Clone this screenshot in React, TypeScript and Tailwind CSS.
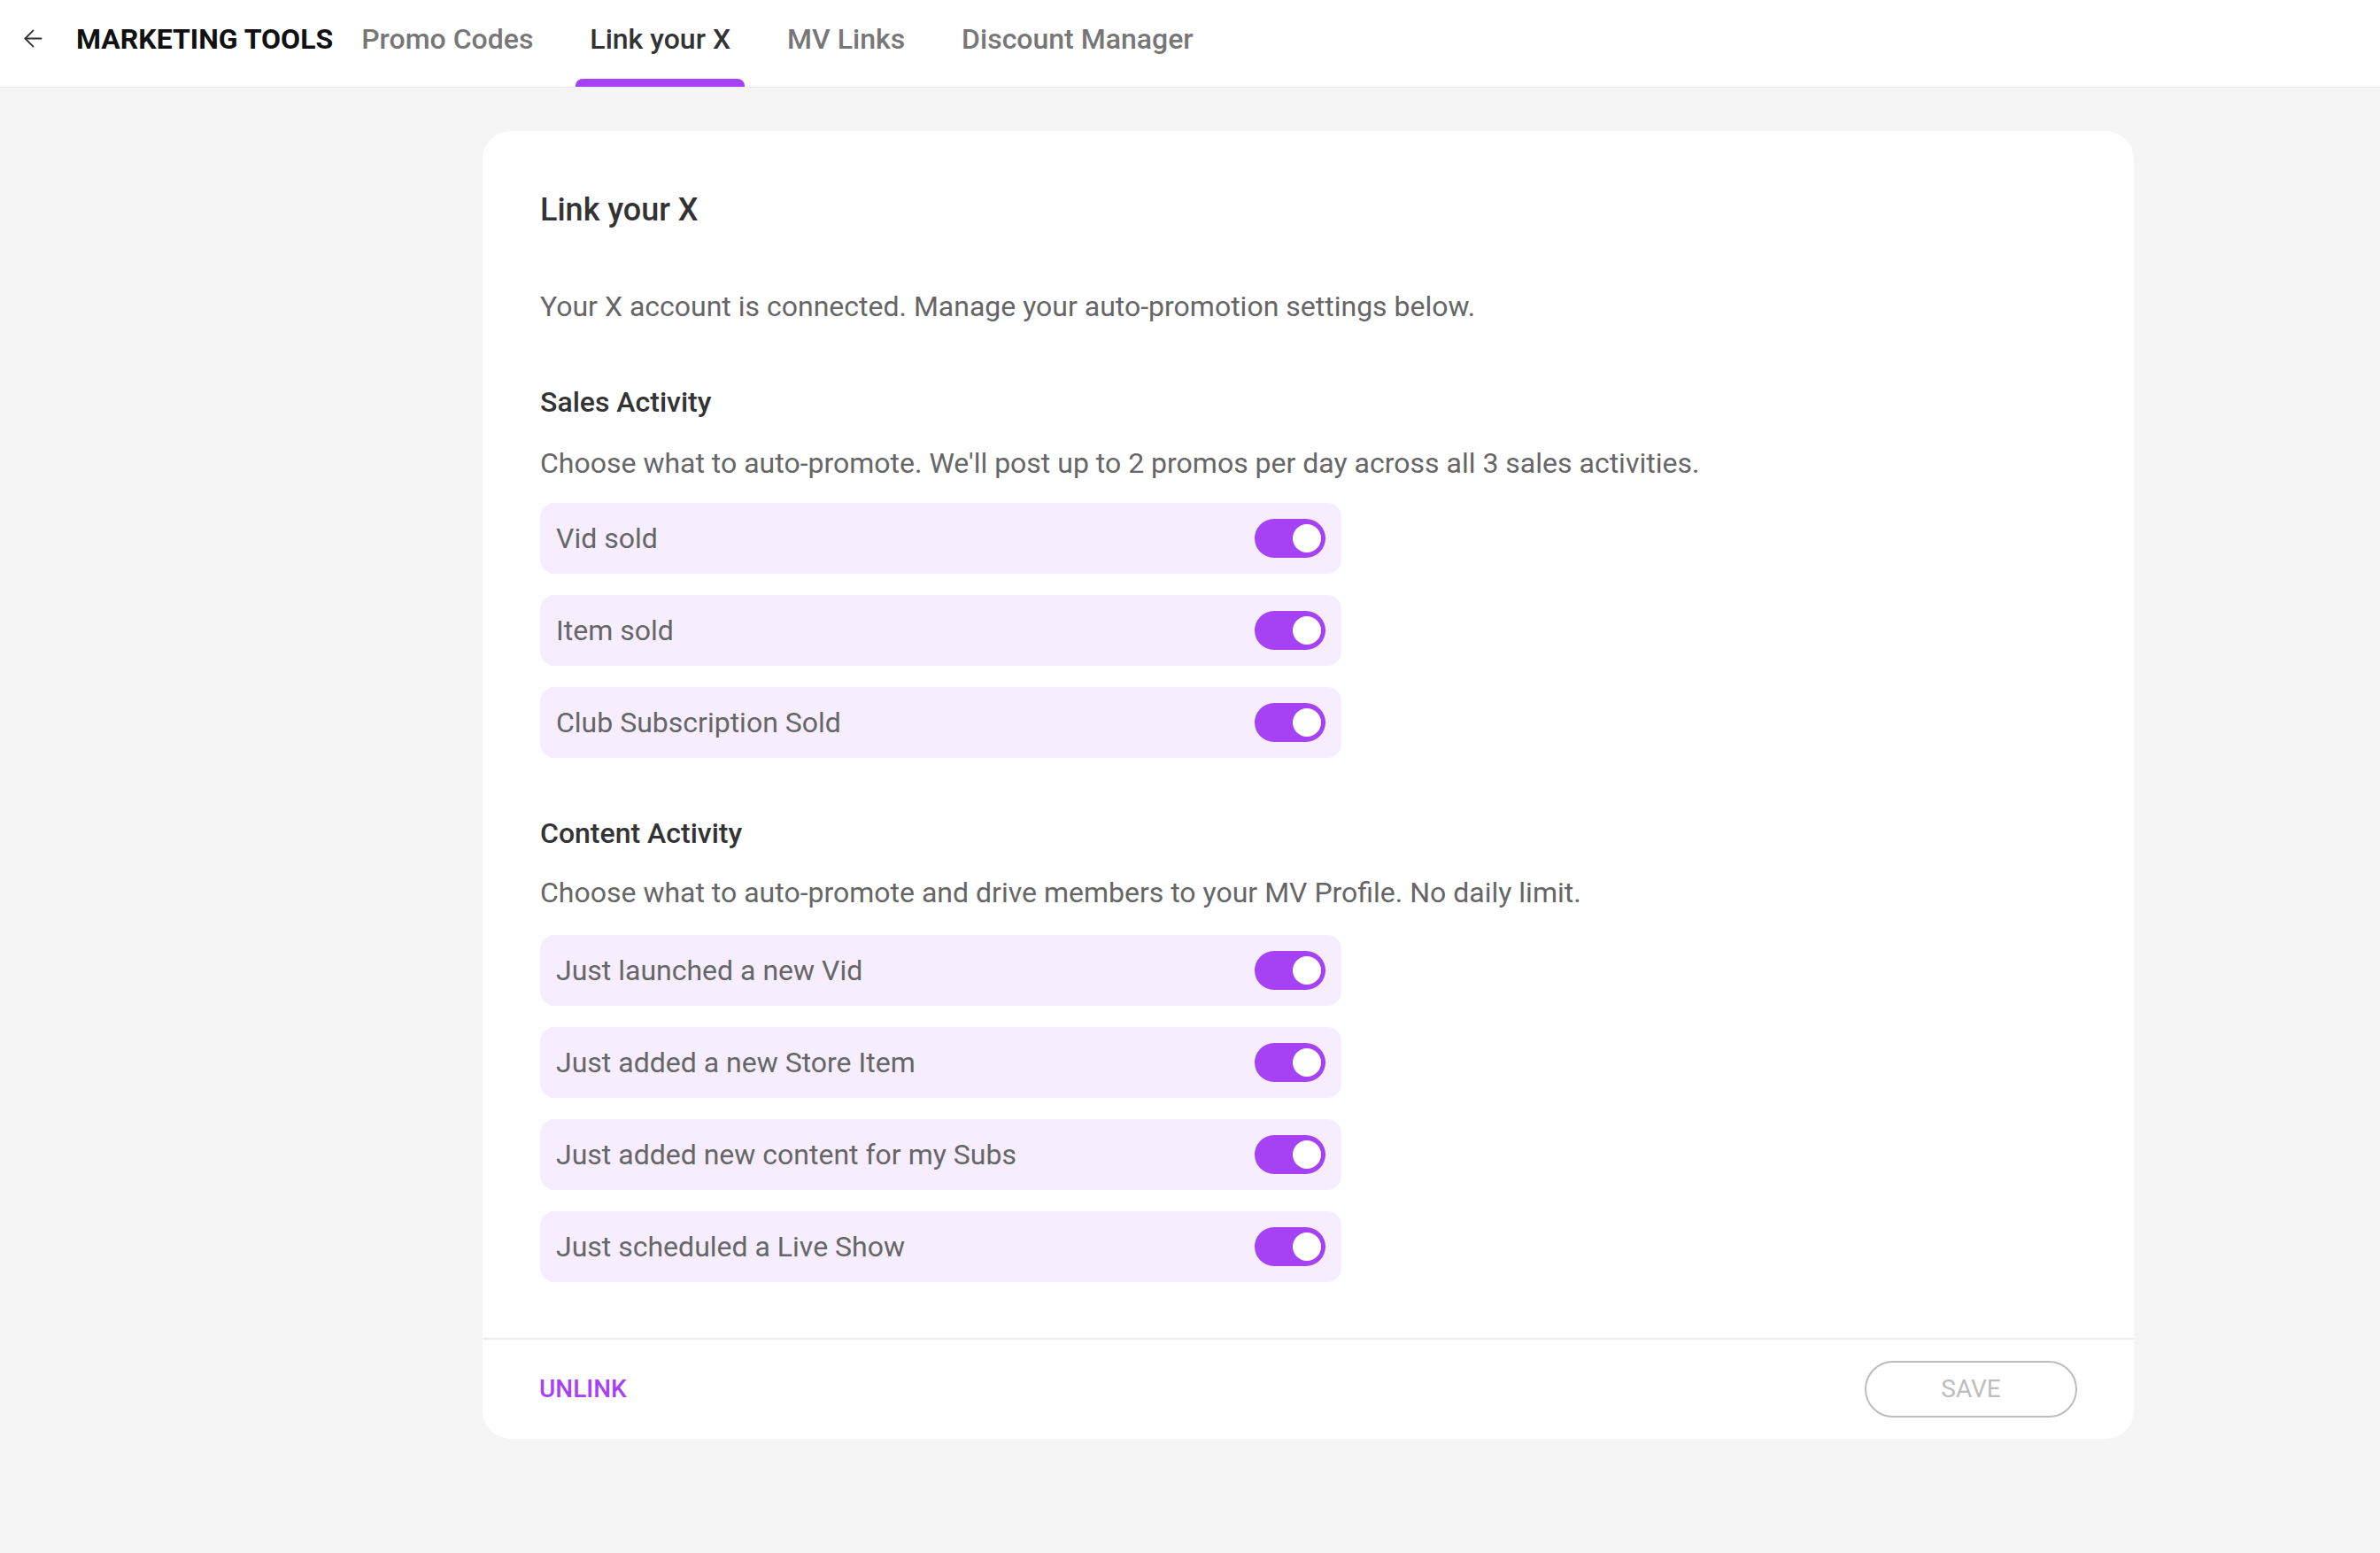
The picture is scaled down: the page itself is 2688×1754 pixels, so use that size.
import { ArrowLeft } from 'lucide-react';

const salesItems = ['Vid sold', 'Item sold', 'Club Subscription Sold'];
const contentItems = [
  'Just launched a new Vid',
  'Just added a new Store Item',
  'Just added new content for my Subs',
  'Just scheduled a Live Show',
];

const tabs = ['Promo Codes', 'Link your X', 'MV Links', 'Discount Manager'];

function Toggle() {
  return (
    <div className="flex h-[44px] w-[80px] items-center justify-end rounded-full bg-[#a742f4] pr-[5px]">
      <div className="h-[32px] w-[32px] rounded-full bg-white" />
    </div>
  );
}

function ToggleRow({ label }: { label: string }) {
  return (
    <div className="flex h-[80px] w-[905px] items-center justify-between rounded-[16px] bg-[#f6eefe] pl-[18px] pr-[18px]">
      <span className="text-[32px] leading-[48px] text-[#666666]">{label}</span>
      <Toggle />
    </div>
  );
}

export default function App() {
  return (
    <div className="min-h-screen bg-[#f5f5f5] font-['Roboto',sans-serif]">
      {/* top bar */}
      <div className="flex h-[99px] items-stretch border-b border-[#ececec] bg-white pl-[22px]">
        <div className="flex h-[87px] items-center">
          <ArrowLeft size={31} strokeWidth={1.4} className="text-[#333333]" />
        </div>
        <div className="ml-[33px] flex h-[87px] items-center text-[32px] font-bold text-[#111111]">
          MARKETING TOOLS
        </div>
        <div className="ml-[16px] flex gap-[32px]">
          {tabs.map((tab) => {
            const active = tab === 'Link your X';
            return (
              <div key={tab} className="flex flex-col">
                <div
                  className={`flex h-[87px] items-center px-4 text-[32px] font-medium ${
                    active ? 'text-[#333333]' : 'text-[#777777]'
                  }`}
                >
                  {tab}
                </div>
                <div className={`mt-auto h-[9px] rounded-t-[8px] ${active ? 'bg-[#a742f4]' : ''}`} />
              </div>
            );
          })}
        </div>
      </div>

      {/* card */}
      <div className="ml-[545px] mt-[49px] w-[1865px] rounded-[32px] bg-white">
        <div className="px-[65px] pb-[63px] pt-[67px]">
          <h2 className="text-[36px] font-medium leading-[44px] text-[#333333]">Link your X</h2>
          <p className="mt-[63px] text-[32px] leading-[48px] text-[#666666]">
            Your X account is connected. Manage your auto-promotion settings below.
          </p>

          <h3 className="mt-[60px] text-[32px] font-medium leading-[48px] text-[#333333]">Sales Activity</h3>
          <p className="mt-[21px] text-[32px] leading-[48px] text-[#666666]">
            Choose what to auto-promote. We'll post up to 2 promos per day across all 3 sales activities.
          </p>
          <div className="mt-[21px] flex flex-col gap-[24px]">
            {salesItems.map((item) => (
              <ToggleRow key={item} label={item} />
            ))}
          </div>

          <h3 className="mt-[61px] text-[32px] font-medium leading-[48px] text-[#333333]">Content Activity</h3>
          <p className="mt-[19px] text-[32px] leading-[48px] text-[#666666]">
            Choose what to auto-promote and drive members to your MV Profile. No daily limit.
          </p>
          <div className="mt-[24px] flex flex-col gap-[24px]">
            {contentItems.map((item) => (
              <ToggleRow key={item} label={item} />
            ))}
          </div>
        </div>

        <div className="flex items-center justify-between border-t-2 border-[#ececec] px-[64px] py-[24px]">
          <button type="button" className="text-[28px] font-medium text-[#a742f4]">
            UNLINK
          </button>
          <button
            type="button"
            className="flex h-[64px] w-[240px] items-center justify-center rounded-full border-2 border-[#bdbdbd] text-[28px] text-[#bdbdbd]"
          >
            SAVE
          </button>
        </div>
      </div>
    </div>
  );
}
